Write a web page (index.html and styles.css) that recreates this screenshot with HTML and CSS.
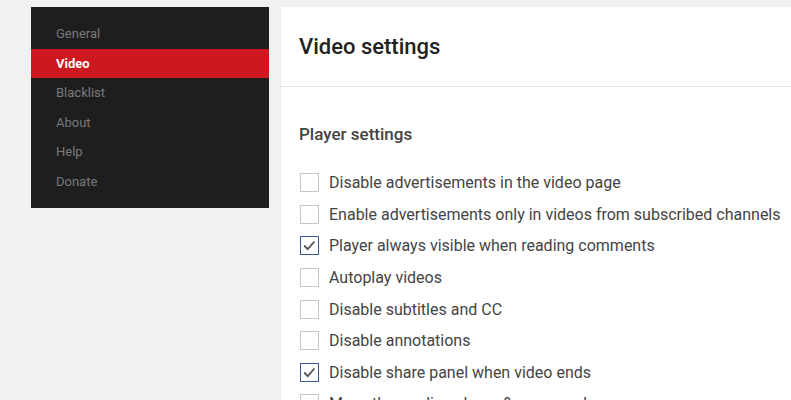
FILE: index.html
```html
<!DOCTYPE html>
<html lang="en">
<head>
    <meta charset="UTF-8">
    <title>Video settings</title>
    <link rel="stylesheet" href="styles.css">
</head>
<body>
  <div class="layout">
    <ul class="sidebar">
      <li class="nav-item">General</li>
      <li class="nav-item active">Video</li>
      <li class="nav-item">Blacklist</li>
      <li class="nav-item">About</li>
      <li class="nav-item">Help</li>
      <li class="nav-item">Donate</li>
    </ul>

    <div class="main">
      <h1 class="main-header">Video settings</h1>

      <div class="section">
        <h2 class="section-title">Player settings</h2>

        <label class="option"><span class="box"></span>Disable advertisements in the video page</label>
        <label class="option"><span class="box"></span>Enable advertisements only in videos from subscribed channels</label>
        <label class="option"><span class="box checked"><svg viewBox="0 0 19 19"><path d="M3.5 9.5 L7.5 13.5 L15 5"/></svg></span>Player always visible when reading comments</label>
        <label class="option"><span class="box"></span>Autoplay videos</label>
        <label class="option"><span class="box"></span>Disable subtitles and CC</label>
        <label class="option"><span class="box"></span>Disable annotations</label>
        <label class="option"><span class="box checked"><svg viewBox="0 0 19 19"><path d="M3.5 9.5 L7.5 13.5 L15 5"/></svg></span>Disable share panel when video ends</label>
        <label class="option"><span class="box"></span>Move the media volume &amp; progress bar</label>
      </div>
    </div>
  </div>
</body>
</html>
```

FILE: styles.css
```css
* {
    margin: 0;
    padding: 0;
    box-sizing: border-box;
}

body {
    font-family: Roboto, 'Liberation Sans', sans-serif;
    background: #f1f1f1;
    overflow: hidden;
}

.layout {
    display: flex;
    align-items: flex-start;
    gap: 12px;
    padding: 7px 0 0 31px;
}

.sidebar {
    list-style: none;
    width: 238px;
    background: #1e1e1e;
    padding: 12px 0;
}

.nav-item {
    height: 29.5px;
    line-height: 29.5px;
    padding-left: 25px;
    font-size: 13px;
    color: #7a7a7a;
}

.nav-item.active {
    background: #cc181e;
    color: #fff;
    font-weight: bold;
}

.main {
    flex: 1;
    background: #fff;
    min-height: 420px;
    box-shadow: 0 1px 2px rgba(0, 0, 0, 0.08);
}

.main-header {
    height: 80px;
    display: flex;
    align-items: center;
    padding-left: 18px;
    border-bottom: 1px solid #e2e2e2;
    font-size: 22px;
    font-weight: 500;
    color: #222;
}

.section {
    padding: 36px 0 0 18px;
}

.section-title {
    font-size: 17px;
    font-weight: 500;
    line-height: 22px;
    color: #444;
    margin-bottom: 22px;
}

.option {
    display: flex;
    align-items: center;
    height: 31.6px;
    font-size: 16px;
    color: #444;
}

.box {
    width: 19px;
    height: 19px;
    margin: 0 10px 0 1px;
    border: 1px solid #c6c6c6;
    flex-shrink: 0;
}

.box.checked {
    border-color: #3b5998;
}

.box svg {
    display: block;
    width: 17px;
    height: 17px;
}

.box svg path {
    fill: none;
    stroke: #555;
    stroke-width: 2;
}
```
